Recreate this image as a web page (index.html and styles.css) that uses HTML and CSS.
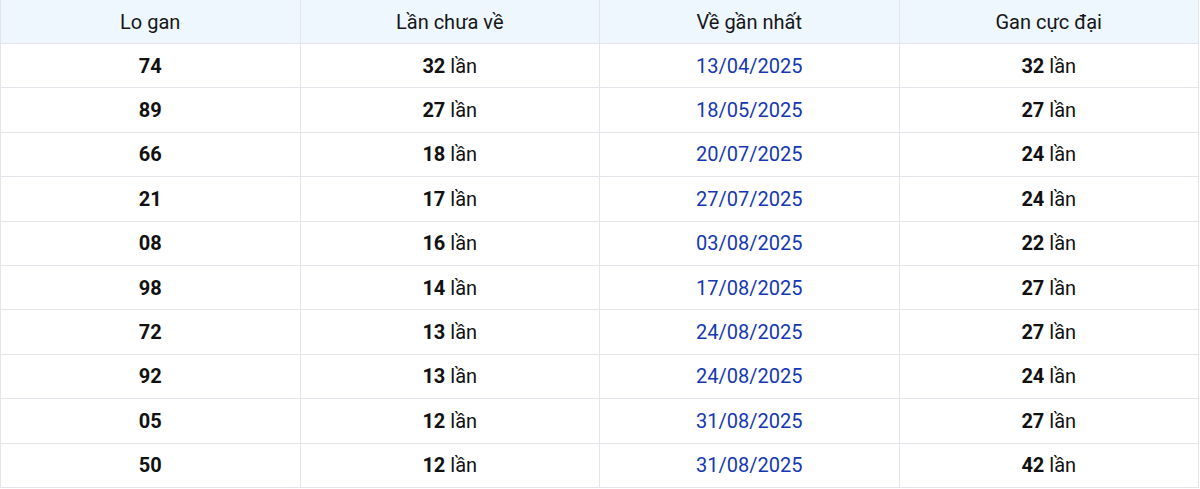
FILE: index.html
```html
<!DOCTYPE html>
<html lang="vi">
<head>
<meta charset="utf-8">
<link rel="stylesheet" href="styles.css">
</head>
<body>
<table class="gan">
<thead>
<tr><th>Lo gan</th><th>Lần chưa về</th><th>Về gần nhất</th><th>Gan cực đại</th></tr>
</thead>
<tbody>
<tr><td class="num">74</td><td><b>32</b> lần</td><td class="date">13/04/2025</td><td><b>32</b> lần</td></tr>
<tr><td class="num">89</td><td><b>27</b> lần</td><td class="date">18/05/2025</td><td><b>27</b> lần</td></tr>
<tr><td class="num">66</td><td><b>18</b> lần</td><td class="date">20/07/2025</td><td><b>24</b> lần</td></tr>
<tr><td class="num">21</td><td><b>17</b> lần</td><td class="date">27/07/2025</td><td><b>24</b> lần</td></tr>
<tr><td class="num">08</td><td><b>16</b> lần</td><td class="date">03/08/2025</td><td><b>22</b> lần</td></tr>
<tr><td class="num">98</td><td><b>14</b> lần</td><td class="date">17/08/2025</td><td><b>27</b> lần</td></tr>
<tr><td class="num">72</td><td><b>13</b> lần</td><td class="date">24/08/2025</td><td><b>27</b> lần</td></tr>
<tr><td class="num">92</td><td><b>13</b> lần</td><td class="date">24/08/2025</td><td><b>24</b> lần</td></tr>
<tr><td class="num">05</td><td><b>12</b> lần</td><td class="date">31/08/2025</td><td><b>27</b> lần</td></tr>
<tr><td class="num">50</td><td><b>12</b> lần</td><td class="date">31/08/2025</td><td><b>42</b> lần</td></tr>
</tbody>
</table>
</body>
</html>
```
FILE: styles.css
```css
html, body {
  margin: 0;
  padding: 0;
  background: #ffffff;
}
body {
  font-family: Roboto, "Liberation Sans", Arial, sans-serif;
  color: #111111;
}
.gan {
  width: 1199px;
  border-collapse: collapse;
  table-layout: fixed;
  margin-top: -1px;
}
.gan th, .gan td {
  border: 1px solid #e3e5ea;
  padding: 0;
  text-align: center;
  vertical-align: middle;
  font-size: 20px;
  line-height: 24px;
}
.gan th {
  height: 43px;
  background: #eef6fe;
  font-weight: 400;
  color: #161616;
}
.gan td {
  height: 43.4px;
}
.gan td b, .gan td.num {
  font-weight: 700;
}
.gan td.date {
  color: #1538b2;
}
```
